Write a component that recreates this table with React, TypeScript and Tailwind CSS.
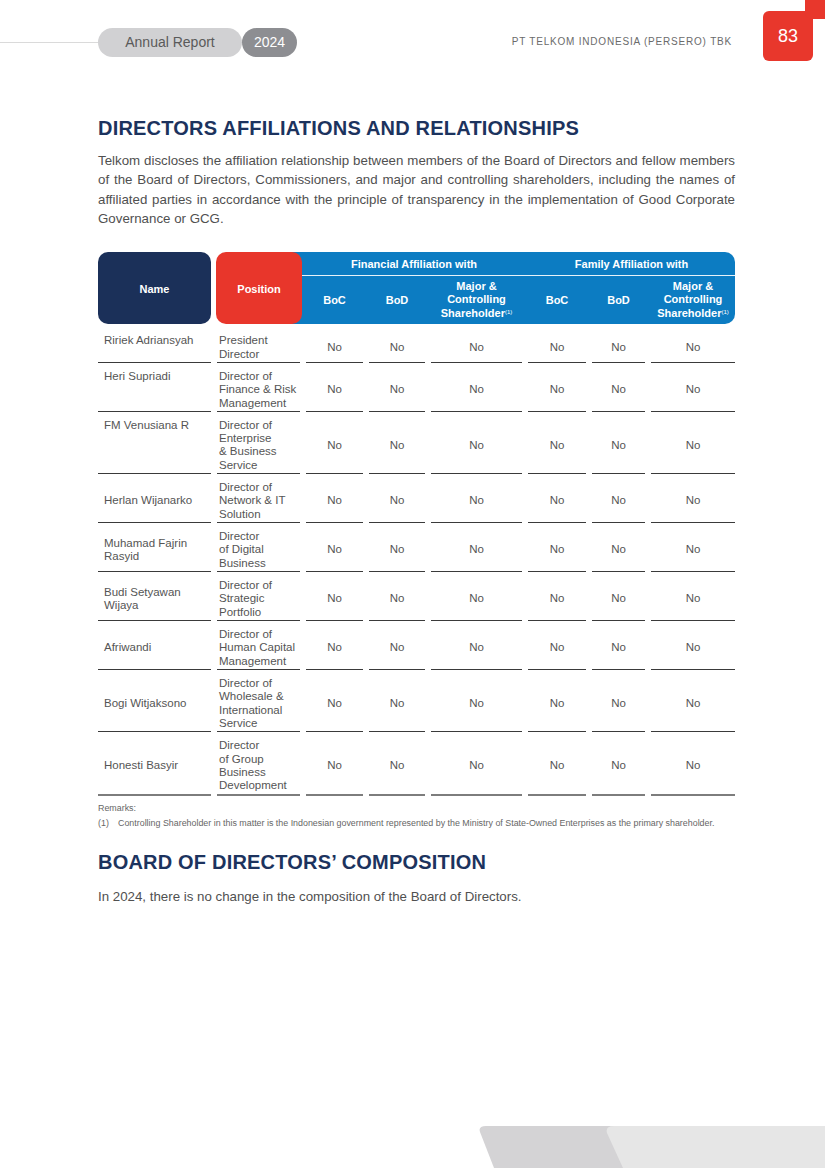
import React from "react";

type Row = { name: string[]; pos: string[]; top?: boolean };

const rows: Row[] = [
  { name: ["Ririek Adriansyah"], pos: ["President", "Director"], top: true },
  { name: ["Heri Supriadi"], pos: ["Director of", "Finance & Risk", "Management"], top: true },
  { name: ["FM Venusiana R"], pos: ["Director of", "Enterprise", "& Business", "Service"], top: true },
  { name: ["Herlan Wijanarko"], pos: ["Director of", "Network & IT", "Solution"] },
  { name: ["Muhamad Fajrin", "Rasyid"], pos: ["Director", "of Digital", "Business"] },
  { name: ["Budi Setyawan", "Wijaya"], pos: ["Director of", "Strategic", "Portfolio"] },
  { name: ["Afriwandi"], pos: ["Director of", "Human Capital", "Management"] },
  { name: ["Bogi Witjaksono"], pos: ["Director of", "Wholesale &", "International", "Service"] },
  { name: ["Honesti Basyir"], pos: ["Director", "of Group", "Business", "Development"] },
];

const COLS = "grid grid-cols-[113px_83px_57px_56px_91px_58px_53px_84px] gap-x-[6px]";

function Major() {
  return (
    <div className="flex flex-col items-center justify-center text-center leading-[13.5px]">
      <span>Major &amp;</span>
      <span>Controlling</span>
      <span>
        Shareholder<sup className="text-[6px] font-normal">(1)</sup>
      </span>
    </div>
  );
}

export default function App() {
  return (
    <div className="w-[825px] h-[1168px] flex flex-col bg-white overflow-hidden font-['Liberation_Sans',Arial,sans-serif] text-[#4f4f4f]">
      {/* Top header */}
      <div className="flex items-start h-[70px] shrink-0">
        <div className="flex items-center mt-[28px]">
          <div className="w-[98px] h-[1.5px] bg-[#dadada]" />
          <div className="w-[144px] h-[29px] rounded-full bg-[#d1d1d3] flex items-center justify-center text-[14px] text-[#5a5a5a]">
            Annual Report
          </div>
          <div className="w-[55px] h-[29px] rounded-full bg-[#8d8e92] flex items-center justify-center text-[14px] text-white">
            2024
          </div>
        </div>
        <div className="flex-1" />
        <div className="mt-[37px] text-[10px] leading-[10px] tracking-[0.8px] text-[#6b6b6b]">
          PT TELKOM INDONESIA (PERSERO) TBK
        </div>
        <div className="ml-[31px] mt-[11px] w-[50px] h-[50px] rounded-[6px] bg-[#e8372c] flex items-center justify-center text-[18px] text-white">
          83
        </div>
        <div className="w-[20px] h-[19px] -ml-[8px] bg-[#e8372c] rounded-bl-[6px]" />
      </div>

      {/* Content */}
      <div className="pl-[98px] pr-[90px] flex flex-col">
        <h1 className="mt-[46px] text-[20px] leading-[24px] font-bold tracking-[0.2px] text-[#1c335e]">
          DIRECTORS AFFILIATIONS AND RELATIONSHIPS
        </h1>
        <div className="mt-[11px] text-[13.3px] leading-[19.3px] text-[#505050]">
          <div className="text-justify [text-align-last:justify] whitespace-nowrap">
            Telkom discloses the affiliation relationship between members of the Board of Directors and fellow members
          </div>
          <div className="text-justify [text-align-last:justify] whitespace-nowrap">
            of the Board of Directors, Commissioners, and major and controlling shareholders, including the names of
          </div>
          <div className="text-justify [text-align-last:justify] whitespace-nowrap">
            affiliated parties in accordance with the principle of transparency in the implementation of Good Corporate
          </div>
          <div>Governance or GCG.</div>
        </div>

        {/* Table header */}
        <div className={`${COLS} grid-rows-[24px_48px] mt-[24px] text-white text-[11px] font-bold`}>
          <div className="col-start-3 col-end-9 row-start-1 row-end-3 -ml-[20px] bg-[#0c7cc2] rounded-r-[10px]" />
          <div className="col-start-3 col-end-9 row-start-1 self-end -ml-[20px] h-[1.5px] bg-white/90" />
          <div className="col-start-1 row-start-1 row-span-2 pt-[3px] bg-[#1b3059] rounded-[10px] flex items-center justify-center">
            Name
          </div>
          <div className="col-start-2 row-start-1 row-span-2 pt-[3px] -ml-[1px] -mr-[2px] bg-[#e8362b] rounded-[10px] flex items-center justify-center">
            Position
          </div>
          <div className="col-start-3 col-end-6 row-start-1 flex items-center justify-center">
            Financial Affiliation with
          </div>
          <div className="col-start-6 col-end-9 row-start-1 flex items-center justify-center">
            Family Affiliation with
          </div>
          <div className="col-start-3 row-start-2 flex items-center justify-center">BoC</div>
          <div className="col-start-4 row-start-2 flex items-center justify-center">BoD</div>
          <div className="col-start-5 row-start-2 flex items-center justify-center">
            <Major />
          </div>
          <div className="col-start-6 row-start-2 flex items-center justify-center">BoC</div>
          <div className="col-start-7 row-start-2 flex items-center justify-center">BoD</div>
          <div className="col-start-8 row-start-2 flex items-center justify-center">
            <Major />
          </div>
        </div>

        {/* Table body */}
        <div className={`${COLS} mt-[3px] text-[11.5px] leading-[13.33px] text-[#555555]`}>
          {rows.map((r, i) => {
            const last = i === rows.length - 1;
            const line = last ? "border-b-2 border-[#7d7d7d]" : "border-b border-[#3a3a3a]";
            return (
              <React.Fragment key={i}>
                <div className={`${line} pt-[7px] pb-[1px] pl-[6px] flex flex-col ${r.top ? "justify-start" : "justify-center"}`}>
                  {r.name.map((n, j) => (
                    <span key={j}>{n}</span>
                  ))}
                </div>
                <div className={`${line} pt-[7px] pb-[1px] pl-[2px] flex flex-col`}>
                  {r.pos.map((p, j) => (
                    <span key={j} className="whitespace-nowrap">
                      {p}
                    </span>
                  ))}
                </div>
                {[0, 1, 2, 3, 4, 5].map((k) => (
                  <div key={k} className={`${line} pt-[7px] pb-[1px] flex items-center justify-center`}>
                    No
                  </div>
                ))}
              </React.Fragment>
            );
          })}
        </div>

        {/* Remarks */}
        <div className="mt-[5px] text-[8.9px] leading-[15px] text-[#666666]">
          <div>Remarks:</div>
          <div className="flex whitespace-nowrap">
            <span className="w-[20px]">(1)</span>
            <span>
              Controlling Shareholder in this matter is the Indonesian government represented by the Ministry of
              State-Owned Enterprises as the primary shareholder.
            </span>
          </div>
        </div>

        <h2 className="mt-[19px] text-[20px] leading-[24px] font-bold tracking-[0.2px] text-[#1c335e]">
          BOARD OF DIRECTORS’ COMPOSITION
        </h2>
        <p className="mt-[13px] text-[13.3px] leading-[19.3px] text-[#505050]">
          In 2024, there is no change in the composition of the Board of Directors.
        </p>
      </div>

      <div className="flex-1" />

      {/* Footer decoration */}
      <svg width="825" height="42" viewBox="0 0 825 42" className="block shrink-0">
        <path d="M486 0 L620 0 L636 42 L494 42 L480 6 Q478 0 486 0 Z" fill="#d4d3d5" />
        <path d="M614 0 L825 0 L825 42 L623 42 L607 7 Q605 0 614 0 Z" fill="#e6e6e6" />
      </svg>
    </div>
  );
}
